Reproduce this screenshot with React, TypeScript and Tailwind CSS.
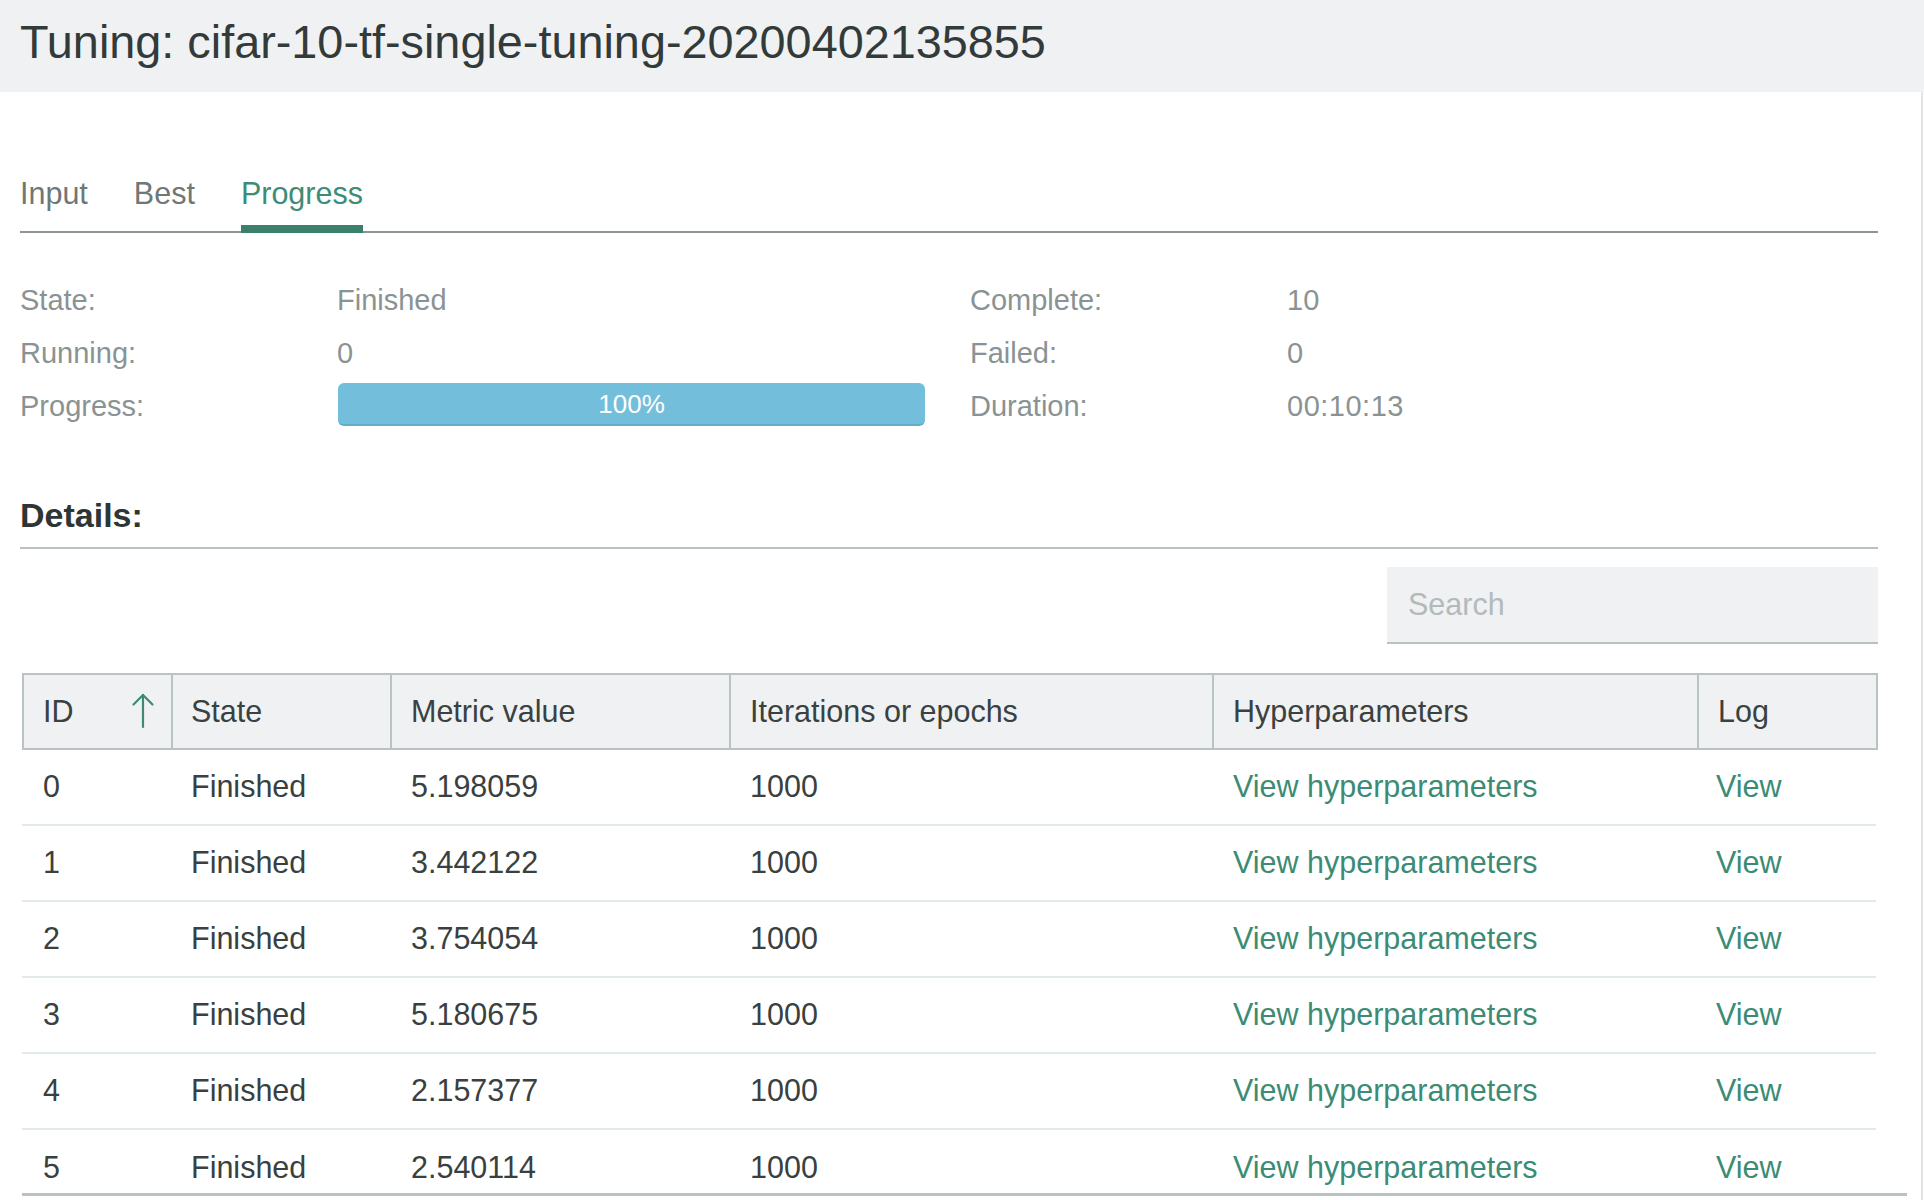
import React from "react";

const rows = [
  { id: "0", metric: "5.198059" },
  { id: "1", metric: "3.442122" },
  { id: "2", metric: "3.754054" },
  { id: "3", metric: "5.180675" },
  { id: "4", metric: "2.157377" },
  { id: "5", metric: "2.540114" },
];

function SortArrow() {
  return (
    <svg width="24" height="36" viewBox="0 0 24 36" fill="none" stroke="#3b8b75" strokeWidth="2.2" strokeLinecap="round" strokeLinejoin="round">
      <path d="M12 2 L12 34" />
      <path d="M2.5 11.5 L12 2 L21.5 11.5" />
    </svg>
  );
}

export default function App() {
  const font = { fontFamily: '"Liberation Sans", Arial, Helvetica, sans-serif' };
  return (
    <div className="w-[1924px] h-[1200px] bg-white overflow-hidden" style={font}>
      {/* Header */}
      <div className="h-[92px] bg-[#f0f1f3] pl-[20px] pt-[19px]">
        <div className="text-[46.8px] leading-none text-[#323a3a]">Tuning: cifar-10-tf-single-tuning-20200402135855</div>
      </div>

      <div className="w-[1923px] h-[1108px] border-r-2 border-[#e2e4e6] pl-[20px] overflow-hidden">
        <div className="w-[1858px]">
          {/* Tabs */}
          <div className="mt-[86px] flex gap-[46px] border-b-2 border-[#8d9494]">
            <div className="-mb-[2px] pb-[16px] border-b-[8px] border-transparent text-[30.5px] leading-none text-[#6f7777]">Input</div>
            <div className="-mb-[2px] pb-[16px] border-b-[8px] border-transparent text-[30.5px] leading-none text-[#6f7777]">Best</div>
            <div className="-mb-[2px] pb-[16px] border-b-[8px] border-[#3b806c] text-[30.5px] leading-none text-[#3d8c75]">Progress</div>
          </div>

          {/* Info grid */}
          <div className="mt-[41px] grid grid-cols-[317px_633px_317px_1fr] auto-rows-[53px] items-center text-[29px] leading-none text-[#8a9393]">
            <div>State:</div>
            <div>Finished</div>
            <div>Complete:</div>
            <div>10</div>
            <div>Running:</div>
            <div>0</div>
            <div>Failed:</div>
            <div>0</div>
            <div>Progress:</div>
            <div>
              <div className="ml-[1px] -mt-[3px] w-[587px] h-[43px] rounded-[6px] bg-[#73bfdb] border-b-2 border-[#62adc9] flex items-center justify-center text-[26px] text-white">
                100%
              </div>
            </div>
            <div>Duration:</div>
            <div className="tracking-[0.5px]">00:10:13</div>
          </div>

          {/* Details */}
          <div className="mt-[65px] pb-[15px] border-b-2 border-[#b9c2c2] text-[34px] leading-none font-bold text-[#2e3535]">
            Details:
          </div>

          {/* Search */}
          <div className="mt-[18px] flex justify-end">
            <div className="w-[491px] h-[77px] bg-[#f0f1f3] border-b-2 border-[#b9c2c2] pl-[21px] flex items-center text-[30.5px] leading-none text-[#b3baba]">
              Search
            </div>
          </div>

          {/* Table */}
          <div className="mt-[29px] ml-[2px] w-[1885px] text-[30.5px] leading-none">
            <div className="w-[1856px] h-[77px] border-2 border-[#b9c3c3] bg-[#f0f1f3] grid grid-cols-[147px_219px_339px_483px_485px_179px] text-[#3a4141]">
              <div className="flex items-center justify-between pl-[19px] pr-[16px]">
                <span>ID</span>
                <SortArrow />
              </div>
              <div className="flex items-center border-l-2 border-[#b9c3c3] pl-[18px]">State</div>
              <div className="flex items-center border-l-2 border-[#b9c3c3] pl-[19px]">Metric value</div>
              <div className="flex items-center border-l-2 border-[#b9c3c3] pl-[19px]">Iterations or epochs</div>
              <div className="flex items-center border-l-2 border-[#b9c3c3] pl-[19px]">Hyperparameters</div>
              <div className="flex items-center border-l-2 border-[#b9c3c3] pl-[19px]">Log</div>
            </div>
            {rows.map((r, i) => (
              <div
                key={r.id}
                className={
                  i < rows.length - 1
                    ? "w-[1854px] h-[76px] border-b-2 border-[#e2e9eb] grid grid-cols-[149px_219px_339px_483px_485px_179px] items-center text-[#3a3f3f]"
                    : "w-[1854px] h-[63px] pt-[13px] grid grid-cols-[149px_219px_339px_483px_485px_179px] items-center text-[#3a3f3f]"
                }
              >
                <div className="pl-[21px]">{r.id}</div>
                <div className="pl-[20px]">Finished</div>
                <div className="pl-[21px]">{r.metric}</div>
                <div className="pl-[21px]">1000</div>
                <div className="pl-[21px] text-[#3b8b75]">View hyperparameters</div>
                <div className="pl-[19px] text-[#3b8b75]">View</div>
              </div>
            ))}
            <div className="w-[1885px] h-[3px] bg-[#b9c2c2]" />
          </div>
        </div>
      </div>
    </div>
  );
}
